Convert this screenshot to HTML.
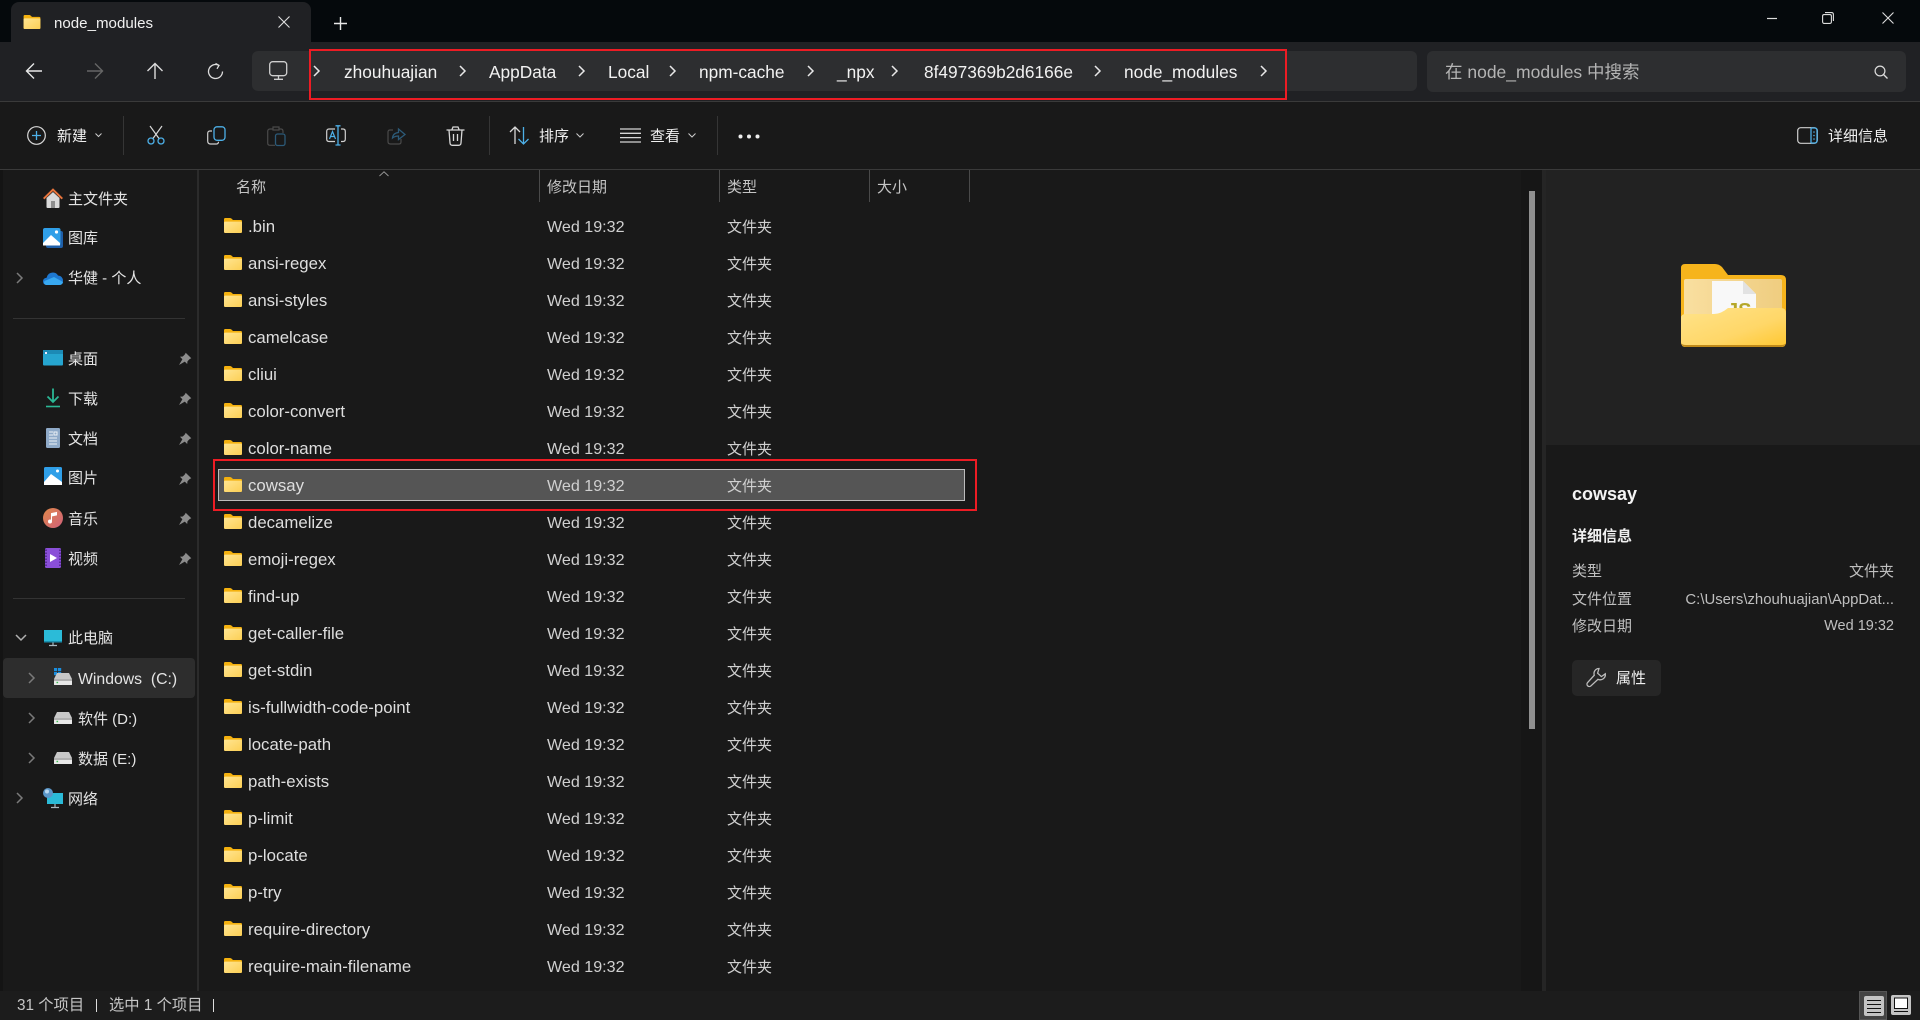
<!DOCTYPE html>
<html lang="zh"><head><meta charset="utf-8"><title>node_modules</title>
<style>
*{box-sizing:border-box}
html,body{margin:0;padding:0;width:1920px;height:1020px;overflow:hidden;background:#191919}
body{font-family:"Liberation Sans","Noto Sans CJK SC",sans-serif;font-size:15px;color:#e8e8e8;position:relative}
.a{position:absolute}
.t{position:absolute;line-height:20px;height:20px;white-space:nowrap}
.b{color:#f2f2f2;font-size:17.3px;top:62px}
.c{position:absolute;top:64px;color:#e8e8e8}
.n{color:#dedede;font-size:16.8px}
.d{color:#d0d0d0;font-size:16.1px;left:547px}
.y{color:#d0d0d0;font-size:15px;margin-top:1px;left:727px}
.h{color:#c4c4c4;font-size:15px;top:178px}
.g{color:#e4e4e4;font-size:15px;margin-top:1px}
.k{color:#f0f0f0;top:127px}
svg{position:absolute;overflow:visible}
.sep{position:absolute;background:#353535;width:1px}
</style></head><body>
<svg width="0" height="0" style="position:absolute"><defs>
<linearGradient id="fg" x1="0" y1="0" x2="1" y2="1"><stop offset="0" stop-color="#ffe592"/><stop offset="1" stop-color="#fccf55"/></linearGradient>
<linearGradient id="fb" x1="0" y1="0" x2="1" y2="1"><stop offset="0" stop-color="#ffe38a"/><stop offset=".6" stop-color="#ffd768"/><stop offset="1" stop-color="#ffc72f"/></linearGradient>
<linearGradient id="fi" x1="0" y1="0" x2="1" y2="0"><stop offset="0" stop-color="#f9dfa0"/><stop offset="1" stop-color="#efcd80"/></linearGradient>
<symbol id="f" viewBox="0 0 18 15"><path d="M0 1.2Q0 0 1.2 0H6Q7 0 7.7 .8L9 2H16.8Q18 2 18 3.2V13.8Q18 15 16.8 15H1.2Q0 15 0 13.8Z" fill="#f4b10f"/><path d="M0 4.6Q0 3.6 1 3.6H17Q18 3.6 18 4.6V13.8Q18 15 16.8 15H1.2Q0 15 0 13.8Z" fill="url(#fg)"/></symbol>
<symbol id="pin" viewBox="0 0 14 14"><path d="M7.7.7 13.3 6.3 11.7 7 9.5 9.2 9.2 12 6.8 9.6 1 13 4.4 7.2 2 4.8 4.8 4.5 7 2.3Z" fill="#8c8c8c"/></symbol>
<symbol id="chev" viewBox="0 0 10 14"><path d="M2 2 7 7 2 12" fill="none" stroke="currentColor" stroke-width="1.5"/></symbol>
<symbol id="drv" viewBox="0 0 18 12"><path d="M3 0H15L18 6V12H0V6Z" fill="#c8c8c8"/><rect y="6" width="18" height="6" rx="1" fill="#e8e8e8"/><path d="M0 7H18" stroke="#555" stroke-width=".7"/><rect x="2.5" y="8.8" width="1.6" height="1.4" fill="#3fbf55"/></symbol>
</defs></svg>

<!-- title bar -->
<div class="a" style="left:0;top:0;width:1920px;height:42px;background:#05090c"></div>
<div class="a" style="left:11px;top:2px;width:300px;height:40px;background:#202124;border-radius:8px 8px 0 0"></div>
<svg style="left:23px;top:15px" width="18" height="14"><use href="#f" width="18" height="14"/></svg>
<div class="t" style="left:54px;top:14px;font-size:15.1px;color:#f0f0f0">node_modules</div>
<svg style="left:278px;top:16px" width="12" height="12"><path d="M.5.5 11.5 11.5M11.5.5.5 11.5" stroke="#e0e0e0" stroke-width="1.1"/></svg>
<svg style="left:334px;top:17px" width="13" height="13"><path d="M6.5 0V13M0 6.5H13" stroke="#e8e8e8" stroke-width="1.4"/></svg>
<svg style="left:1767px;top:13px" width="11" height="10"><path d="M0 5.5H10" stroke="#ddd" stroke-width="1.2"/></svg>
<svg style="left:1822px;top:12px" width="12" height="12"><rect x=".6" y="2.6" width="8.8" height="8.8" rx="1.5" fill="none" stroke="#ddd" stroke-width="1.1"/><path d="M3 .6H9.5Q11.4.6 11.4 2.5V9" fill="none" stroke="#ddd" stroke-width="1.1"/></svg>
<svg style="left:1882px;top:12px" width="12" height="12"><path d="M.5.5 11.5 11.5M11.5.5.5 11.5" stroke="#ddd" stroke-width="1.1"/></svg>

<!-- nav row -->
<div class="a" style="left:0;top:42px;width:1920px;height:59px;background:#202124"></div>
<div class="a" style="left:0;top:101px;width:1920px;height:1px;background:#3a3a3a"></div>
<svg style="left:25px;top:62px" width="18" height="18"><path d="M17 9H1.5M9 1.5 1.5 9 9 16.5" fill="none" stroke="#e8e8e8" stroke-width="1.4"/></svg>
<svg style="left:86px;top:62px" width="18" height="18"><path d="M1 9H16.5M9 1.5 16.5 9 9 16.5" fill="none" stroke="#666" stroke-width="1.4"/></svg>
<svg style="left:146px;top:62px" width="18" height="18"><path d="M9 17V1.5M1.5 9 9 1.5 16.5 9" fill="none" stroke="#dcdcdc" stroke-width="1.4"/></svg>
<svg style="left:207px;top:63px" width="17" height="17"><path d="M11.5 2.2A7 7 0 1 0 15.5 8.5" fill="none" stroke="#dcdcdc" stroke-width="1.3"/><path d="M8.5.5 12 2.4 10 5.8" fill="none" stroke="#dcdcdc" stroke-width="1.3"/></svg>
<div class="a" style="left:252px;top:51px;width:1165px;height:40px;background:#2d2e30;border-radius:6px"></div>
<div class="a" style="left:1427px;top:51px;width:479px;height:41px;background:#2d2e30;border-radius:6px"></div>
<svg style="left:269px;top:61px" width="20" height="19"><rect x=".7" y=".7" width="17" height="14" rx="3" fill="none" stroke="#cfcfcf" stroke-width="1.3"/><path d="M9.5 15V18M5 18.3H14" stroke="#cfcfcf" stroke-width="1.3"/></svg>
<svg class="c" style="left:312px" width="10" height="14"><use href="#chev"/></svg>
<div class="t b" style="left:344px">zhouhuajian</div>
<svg class="c" style="left:458px" width="10" height="14"><use href="#chev"/></svg>
<div class="t b" style="left:489px">AppData</div>
<svg class="c" style="left:577px" width="10" height="14"><use href="#chev"/></svg>
<div class="t b" style="left:608px">Local</div>
<svg class="c" style="left:668px" width="10" height="14"><use href="#chev"/></svg>
<div class="t b" style="left:699px">npm-cache</div>
<svg class="c" style="left:806px" width="10" height="14"><use href="#chev"/></svg>
<div class="t b" style="left:837px">_npx</div>
<svg class="c" style="left:890px" width="10" height="14"><use href="#chev"/></svg>
<div class="t b" style="left:924px">8f497369b2d6166e</div>
<svg class="c" style="left:1093px" width="10" height="14"><use href="#chev"/></svg>
<div class="t b" style="left:1124px">node_modules</div>
<svg class="c" style="left:1259px" width="10" height="14"><use href="#chev"/></svg>
<div class="t" style="left:1445px;top:62px;font-size:17.5px;color:#b4b4b4">在 node_modules 中搜索</div>
<svg style="left:1874px;top:65px" width="14" height="14"><circle cx="6" cy="6" r="4.9" fill="none" stroke="#dcdcdc" stroke-width="1.2"/><path d="M9.5 9.5 13.5 13.5" stroke="#dcdcdc" stroke-width="1.3"/></svg>
<div class="a" style="left:309px;top:49px;width:978px;height:51px;border:2px solid #ed1c24"></div>

<!-- toolbar -->
<div class="a" style="left:0;top:102px;width:1920px;height:67px;background:#191919"></div>
<div class="a" style="left:0;top:169px;width:1920px;height:1px;background:#3a3a3a"></div>
<svg style="left:27px;top:126px" width="19" height="19"><circle cx="9.5" cy="9.5" r="8.8" fill="none" stroke="#d8d8d8" stroke-width="1.2"/><path d="M9.5 5V14M5 9.5H14" stroke="#4db0e8" stroke-width="1.3"/></svg>
<div class="t k" style="left:57px">新建</div>
<svg style="left:95px;top:133px" width="7" height="5"><path d="M.5.5 3.5 3.5 6.5.5" fill="none" stroke="#ccc" stroke-width="1"/></svg>
<div class="sep" style="left:123px;top:116px;height:39px"></div>
<svg style="left:147px;top:125px" width="19" height="20"><path d="M3 1 12 13.5M15 1 6 13.5" stroke="#d8d8d8" stroke-width="1.2" fill="none"/><circle cx="4" cy="16" r="3" fill="none" stroke="#4db0e8" stroke-width="1.3"/><circle cx="14" cy="16" r="3" fill="none" stroke="#4db0e8" stroke-width="1.3"/></svg>
<svg style="left:207px;top:126px" width="19" height="19"><path d="M5 5H3Q.7 5 .7 7.5V15Q.7 18 3.5 18H9Q11.5 18 11.5 15.7" fill="none" stroke="#d0d0d0" stroke-width="1.2"/><rect x="7" y=".8" width="11" height="13.5" rx="3" fill="none" stroke="#4db0e8" stroke-width="1.3"/></svg>
<svg style="left:267px;top:126px" width="19" height="20"><path d="M6 3H3Q.7 3 .7 5.5V17Q.7 19.3 3 19.3H8" fill="none" stroke="#4a4a4a" stroke-width="1.2"/><path d="M6 1H12V4H6ZM12 3H14Q16 3 16 5.5V7" fill="none" stroke="#4a4a4a" stroke-width="1.2"/><rect x="8.5" y="8" width="9.5" height="11.5" rx="2" fill="none" stroke="#2c5a78" stroke-width="1.3"/></svg>
<svg style="left:326px;top:125px" width="20" height="21"><path d="M9 4H3Q.7 4 .7 6.5V14Q.7 16.5 3 16.5H9M15 4H17Q19.3 4 19.3 6.5V14Q19.3 16.5 17 16.5H15" fill="none" stroke="#d0d0d0" stroke-width="1.2"/><path d="M12 1V20M9.5 .8H14.5M9.5 20H14.5" stroke="#4db0e8" stroke-width="1.3" fill="none"/><path d="M3.5 14 6.5 6.5 9.5 14M4.5 11.5H8.5" fill="none" stroke="#4db0e8" stroke-width="1.2"/></svg>
<svg style="left:387px;top:126px" width="19" height="19"><path d="M6 4H3Q1 4 1 6V15.5Q1 18 3.5 18H12Q14 18 14 16V13" fill="none" stroke="#4a4a4a" stroke-width="1.2"/><path d="M5.5 12Q6 7 11.5 6.5V3L18 8.5 11.5 13.5V10Q8 10 5.5 12Z" fill="none" stroke="#2c5a78" stroke-width="1.3"/></svg>
<svg style="left:446px;top:126px" width="19" height="20"><path d="M.5 4H18.5M6 3.5 7 1H12L13 3.5M3 4 4 17Q4.2 19.3 6.5 19.3H12.5Q14.8 19.3 15 17L16 4M7.5 8V15M11.5 8V15" fill="none" stroke="#d8d8d8" stroke-width="1.3"/></svg>
<div class="sep" style="left:489px;top:116px;height:39px"></div>
<svg style="left:509px;top:125px" width="21" height="21"><path d="M6 19V2M1 7 6 2 11 7" fill="none" stroke="#d8d8d8" stroke-width="1.3"/><path d="M14.5 2V19M9.5 14 14.5 19 19.5 14" fill="none" stroke="#4db0e8" stroke-width="1.3"/></svg>
<div class="t k" style="left:539px">排序</div>
<svg style="left:576px;top:133px" width="8" height="5"><path d="M.5.5 4 4 7.5.5" fill="none" stroke="#ccc" stroke-width="1"/></svg>
<svg style="left:620px;top:128px" width="21" height="15"><path d="M0 1H21M0 5.3H21M0 9.6H21M0 14H21" stroke="#d4d4d4" stroke-width="1.3"/></svg>
<div class="t k" style="left:650px">查看</div>
<svg style="left:688px;top:133px" width="8" height="5"><path d="M.5.5 4 4 7.5.5" fill="none" stroke="#ccc" stroke-width="1"/></svg>
<div class="sep" style="left:717px;top:116px;height:39px"></div>
<svg style="left:738px;top:134px" width="22" height="5"><circle cx="2.5" cy="2.5" r="2" fill="#eee"/><circle cx="11" cy="2.5" r="2" fill="#eee"/><circle cx="19.5" cy="2.5" r="2" fill="#eee"/></svg>
<svg style="left:1797px;top:127px" width="21" height="17"><rect x=".7" y=".7" width="19.6" height="15.6" rx="3" fill="none" stroke="#cfcfcf" stroke-width="1.2"/><path d="M14 1V16" stroke="#4db0e8" stroke-width="1.3"/><path d="M14 1H17.5Q20 1 20 3.5V13.5Q20 16 17.5 16H14" fill="none" stroke="#4db0e8" stroke-width="1.3"/><circle cx="17" cy="5" r=".8" fill="#4db0e8"/><circle cx="17" cy="8.5" r=".8" fill="#4db0e8"/><circle cx="17" cy="12" r=".8" fill="#4db0e8"/></svg>
<div class="t k" style="left:1828px">详细信息</div>

<!-- sidebar -->
<div class="a" style="left:0;top:170px;width:3px;height:821px;background:#141414"></div>
<div class="a" style="left:197px;top:170px;width:2px;height:821px;background:#2b2b2b"></div>
<svg style="left:43px;top:188px" width="20" height="21"><path d="M3.5 10V19Q3.5 20 4.5 20H15.5Q16.5 20 16.5 19V10L10 4Z" fill="#d9d9d9"/><path d="M8 20V13H12V20Z" fill="#8e8e8e"/><path d="M.7 10.7 10 1.7 19.3 10.7" fill="none" stroke="#e8743c" stroke-width="2"/></svg>
<div class="t g" style="left:68px;top:189px">主文件夹</div>
<svg style="left:43px;top:228px" width="20" height="20"><rect x="3" y="3" width="17" height="17" rx="2" fill="#1f5fa8"/><rect width="17.5" height="17.5" rx="2" fill="#2f9fe8"/><path d="M0 15 8 7 17 15V17.5H0Z" fill="#fff"/><circle cx="13.5" cy="4" r="1.6" fill="#fff"/></svg>
<div class="t g" style="left:68px;top:228px">图库</div>
<svg style="left:15px;top:271px;color:#7a7a7a" width="10" height="14"><use href="#chev"/></svg>
<svg style="left:43px;top:271px" width="20" height="14"><path d="M4 14Q0 14 0 10.3 0 7.2 3.6 6.7 5 1.5 10 1.5 13.4 1.5 15 4.5 20 5 20 10 20 14 16 14Z" fill="#1e78d0"/><path d="M3 14Q0 13 1.5 10L11 6 20 11Q19.5 14 16 14Z" fill="#38a8f0"/></svg>
<div class="t g" style="left:68px;top:268px">华健 - 个人</div>
<div class="a" style="left:13px;top:318px;width:172px;height:1px;background:#333"></div>

<svg style="left:43px;top:350px" width="20" height="16"><rect width="20" height="15.5" rx="1" fill="#26a5cf"/><rect y="0" width="20" height="4" fill="#1c8ab5"/><rect x="2" y="2" width="2" height="2" fill="#eef"/></svg>
<div class="t g" style="left:68px;top:349px">桌面</div>
<svg style="left:178px;top:352px" width="14" height="14"><use href="#pin"/></svg>
<svg style="left:46px;top:388px" width="14" height="20"><path d="M7 .5V14M1.5 8.5 7 14 12.5 8.5" fill="none" stroke="#2bb795" stroke-width="1.8"/><path d="M0 18.5H14" stroke="#2bb795" stroke-width="1.6"/></svg>
<div class="t g" style="left:68px;top:389px">下载</div>
<svg style="left:178px;top:392px" width="14" height="14"><use href="#pin"/></svg>
<svg style="left:46px;top:428px" width="14" height="20"><rect width="14" height="20" rx="1.2" fill="#8faac8"/><path d="M3 4H7M8 4H11V7H8ZM3 7H7M3 10H11M3 13H11M3 16H11" stroke="#eef2f6" stroke-width="1" fill="none"/></svg>
<div class="t g" style="left:68px;top:429px">文档</div>
<svg style="left:178px;top:432px" width="14" height="14"><use href="#pin"/></svg>
<svg style="left:44px;top:467px" width="18" height="18"><rect width="18" height="18" rx="1.5" fill="#2f9fe8"/><path d="M0 15 7 7 18 15V18H0Z" fill="#fff"/><circle cx="13.5" cy="4" r="1.5" fill="#fff"/></svg>
<div class="t g" style="left:68px;top:468px">图片</div>
<svg style="left:178px;top:472px" width="14" height="14"><use href="#pin"/></svg>
<svg style="left:43px;top:508px" width="20" height="20"><defs><linearGradient id="mu" x1="0" y1="0" x2="1" y2="1"><stop offset="0" stop-color="#e0884a"/><stop offset="1" stop-color="#d0607a"/></linearGradient></defs><circle cx="10" cy="10" r="10" fill="url(#mu)"/><path d="M8.5 13.5V5.5L13.5 4.5V7L8.5 8" fill="#fff" stroke="#fff"/><circle cx="7" cy="13.5" r="2" fill="#fff"/></svg>
<div class="t g" style="left:68px;top:509px">音乐</div>
<svg style="left:178px;top:512px" width="14" height="14"><use href="#pin"/></svg>
<svg style="left:45px;top:548px" width="16" height="20"><rect width="16" height="20" rx="1.5" fill="#8a4fd8"/><path d="M5 6 12 10 5 14Z" fill="#fff"/><path d="M1 1.5V18.5M15 1.5V18.5" stroke="#3a1a70" stroke-width="1.2" stroke-dasharray="1.5 1.5"/></svg>
<div class="t g" style="left:68px;top:549px">视频</div>
<svg style="left:178px;top:552px" width="14" height="14"><use href="#pin"/></svg>
<div class="a" style="left:13px;top:598px;width:172px;height:1px;background:#333"></div>

<svg style="left:15px;top:634px" width="12" height="8"><path d="M1 1 6 6 11 1" fill="none" stroke="#b0b0b0" stroke-width="1.5"/></svg>
<svg style="left:44px;top:630px" width="18" height="16"><rect width="18" height="12.5" fill="#2bbbd8"/><rect y="11" width="18" height="1.5" fill="#1a8fae"/><path d="M9 12.5V15M5 15.5H13" stroke="#a8b8c0" stroke-width="1.2"/></svg>
<div class="t g" style="left:68px;top:628px">此电脑</div>
<div class="a" style="left:3px;top:658px;width:192px;height:40px;background:#2d2d2d;border-radius:4px"></div>
<svg style="left:27px;top:671px;color:#7a7a7a" width="10" height="14"><use href="#chev"/></svg>
<svg style="left:54px;top:668px" width="18" height="18"><rect width="3.2" height="3.2" fill="#1a8fe0"/><rect x="4" width="3.2" height="3.2" fill="#1a8fe0"/><rect y="4" width="3.2" height="3.2" fill="#1a8fe0"/><rect x="4" y="4" width="3.2" height="3.2" fill="#1a8fe0"/><use href="#drv" y="5" width="18" height="12"/></svg>
<div class="t g" style="left:78px;top:669px;font-size:15.8px">Windows&nbsp; (C:)</div>
<svg style="left:27px;top:711px;color:#7a7a7a" width="10" height="14"><use href="#chev"/></svg>
<svg style="left:54px;top:712px" width="18" height="12"><use href="#drv"/></svg>
<div class="t g" style="left:78px;top:709px">软件 (D:)</div>
<svg style="left:27px;top:751px;color:#7a7a7a" width="10" height="14"><use href="#chev"/></svg>
<svg style="left:54px;top:752px" width="18" height="12"><use href="#drv"/></svg>
<div class="t g" style="left:78px;top:749px">数据 (E:)</div>
<svg style="left:15px;top:791px;color:#7a7a7a" width="10" height="14"><use href="#chev"/></svg>
<svg style="left:43px;top:788px" width="20" height="20"><rect x="4" y="5" width="16" height="11" fill="#2bbbd8"/><path d="M12 16V19M8 19.5H16" stroke="#a8b8c0" stroke-width="1.2"/><circle cx="5" cy="5" r="5" fill="#5a96c8"/><circle cx="4" cy="3.5" r="2" fill="#b8d8f0"/></svg>
<div class="t g" style="left:68px;top:789px">网络</div>

<!-- header -->
<div class="t h" style="left:236px">名称</div>
<svg style="left:379px;top:171px" width="10" height="6"><path d="M.5 5 5 .8 9.5 5" fill="none" stroke="#9a9a9a" stroke-width=".9"/></svg>
<div class="sep" style="left:539px;top:170px;height:32px;background:#4a4a4a"></div>
<div class="t h" style="left:547px">修改日期</div>
<div class="sep" style="left:719px;top:170px;height:32px;background:#4a4a4a"></div>
<div class="t h" style="left:727px">类型</div>
<div class="sep" style="left:869px;top:170px;height:32px;background:#4a4a4a"></div>
<div class="t h" style="left:877px">大小</div>
<div class="sep" style="left:969px;top:170px;height:32px;background:#4a4a4a"></div>

<!-- selected row -->
<div class="a" style="left:218px;top:469px;width:747px;height:32px;background:#555;border:1px solid #bcbcbc"></div>
<div class="a" style="left:213px;top:459px;width:764px;height:52px;border:2px solid #ed1c24"></div>

<!-- rows -->
<svg style="left:224px;top:218px" width="18" height="15"><use href="#f"/></svg><div class="t n" style="left:248px;top:217px">.bin</div><div class="t d" style="top:217px">Wed 19:32</div><div class="t y" style="top:217px">文件夹</div>
<svg style="left:224px;top:255px" width="18" height="15"><use href="#f"/></svg><div class="t n" style="left:248px;top:254px">ansi-regex</div><div class="t d" style="top:254px">Wed 19:32</div><div class="t y" style="top:254px">文件夹</div>
<svg style="left:224px;top:292px" width="18" height="15"><use href="#f"/></svg><div class="t n" style="left:248px;top:291px">ansi-styles</div><div class="t d" style="top:291px">Wed 19:32</div><div class="t y" style="top:291px">文件夹</div>
<svg style="left:224px;top:329px" width="18" height="15"><use href="#f"/></svg><div class="t n" style="left:248px;top:328px">camelcase</div><div class="t d" style="top:328px">Wed 19:32</div><div class="t y" style="top:328px">文件夹</div>
<svg style="left:224px;top:366px" width="18" height="15"><use href="#f"/></svg><div class="t n" style="left:248px;top:365px">cliui</div><div class="t d" style="top:365px">Wed 19:32</div><div class="t y" style="top:365px">文件夹</div>
<svg style="left:224px;top:403px" width="18" height="15"><use href="#f"/></svg><div class="t n" style="left:248px;top:402px">color-convert</div><div class="t d" style="top:402px">Wed 19:32</div><div class="t y" style="top:402px">文件夹</div>
<svg style="left:224px;top:440px" width="18" height="15"><use href="#f"/></svg><div class="t n" style="left:248px;top:439px">color-name</div><div class="t d" style="top:439px">Wed 19:32</div><div class="t y" style="top:439px">文件夹</div>
<svg style="left:224px;top:477px" width="18" height="15"><use href="#f"/></svg><div class="t n" style="left:248px;top:476px">cowsay</div><div class="t d" style="top:476px">Wed 19:32</div><div class="t y" style="top:476px">文件夹</div>
<svg style="left:224px;top:514px" width="18" height="15"><use href="#f"/></svg><div class="t n" style="left:248px;top:513px">decamelize</div><div class="t d" style="top:513px">Wed 19:32</div><div class="t y" style="top:513px">文件夹</div>
<svg style="left:224px;top:551px" width="18" height="15"><use href="#f"/></svg><div class="t n" style="left:248px;top:550px">emoji-regex</div><div class="t d" style="top:550px">Wed 19:32</div><div class="t y" style="top:550px">文件夹</div>
<svg style="left:224px;top:588px" width="18" height="15"><use href="#f"/></svg><div class="t n" style="left:248px;top:587px">find-up</div><div class="t d" style="top:587px">Wed 19:32</div><div class="t y" style="top:587px">文件夹</div>
<svg style="left:224px;top:625px" width="18" height="15"><use href="#f"/></svg><div class="t n" style="left:248px;top:624px">get-caller-file</div><div class="t d" style="top:624px">Wed 19:32</div><div class="t y" style="top:624px">文件夹</div>
<svg style="left:224px;top:662px" width="18" height="15"><use href="#f"/></svg><div class="t n" style="left:248px;top:661px">get-stdin</div><div class="t d" style="top:661px">Wed 19:32</div><div class="t y" style="top:661px">文件夹</div>
<svg style="left:224px;top:699px" width="18" height="15"><use href="#f"/></svg><div class="t n" style="left:248px;top:698px">is-fullwidth-code-point</div><div class="t d" style="top:698px">Wed 19:32</div><div class="t y" style="top:698px">文件夹</div>
<svg style="left:224px;top:736px" width="18" height="15"><use href="#f"/></svg><div class="t n" style="left:248px;top:735px">locate-path</div><div class="t d" style="top:735px">Wed 19:32</div><div class="t y" style="top:735px">文件夹</div>
<svg style="left:224px;top:773px" width="18" height="15"><use href="#f"/></svg><div class="t n" style="left:248px;top:772px">path-exists</div><div class="t d" style="top:772px">Wed 19:32</div><div class="t y" style="top:772px">文件夹</div>
<svg style="left:224px;top:810px" width="18" height="15"><use href="#f"/></svg><div class="t n" style="left:248px;top:809px">p-limit</div><div class="t d" style="top:809px">Wed 19:32</div><div class="t y" style="top:809px">文件夹</div>
<svg style="left:224px;top:847px" width="18" height="15"><use href="#f"/></svg><div class="t n" style="left:248px;top:846px">p-locate</div><div class="t d" style="top:846px">Wed 19:32</div><div class="t y" style="top:846px">文件夹</div>
<svg style="left:224px;top:884px" width="18" height="15"><use href="#f"/></svg><div class="t n" style="left:248px;top:883px">p-try</div><div class="t d" style="top:883px">Wed 19:32</div><div class="t y" style="top:883px">文件夹</div>
<svg style="left:224px;top:921px" width="18" height="15"><use href="#f"/></svg><div class="t n" style="left:248px;top:920px">require-directory</div><div class="t d" style="top:920px">Wed 19:32</div><div class="t y" style="top:920px">文件夹</div>
<svg style="left:224px;top:958px" width="18" height="15"><use href="#f"/></svg><div class="t n" style="left:248px;top:957px">require-main-filename</div><div class="t d" style="top:957px">Wed 19:32</div><div class="t y" style="top:957px">文件夹</div>

<!-- scrollbar + divider -->
<div class="a" style="left:1521px;top:170px;width:21px;height:821px;background:#161616"></div>
<div class="a" style="left:1529px;top:191px;width:6px;height:538px;background:#8f8f8f"></div>
<div class="a" style="left:1542px;top:170px;width:4px;height:821px;background:#252525"></div>

<!-- details -->
<div class="a" style="left:1546px;top:170px;width:374px;height:275px;background:#222"></div>
<svg style="left:1681px;top:264px" width="105" height="83" viewBox="0 0 105 83">
<path d="M0 4Q0 0 4 0H34Q38 0 41 3L47 11H100Q105 11 105 16V78Q105 83 100 83H5Q0 83 0 78Z" fill="#f6b41c"/>
<rect x="3" y="15" width="98" height="50" rx="2" fill="url(#fi)"/>
<path d="M31 17H62L75 30V60H31Z" fill="#f8f8f8"/><path d="M62 17 75 30H62Z" fill="#e2e2e2"/>
<text x="46" y="53" font-size="20" font-weight="700" fill="#b5a72a" font-family="Liberation Sans">JS</text>
<path d="M0 54Q0 50 5 50H33Q40 50 47 44H100Q105 44 105 49V78Q105 83 100 83H5Q0 83 0 78Z" fill="url(#fb)"/>
<path d="M0 79Q1 83 5 83H100Q104 83 105 79Q104 81 100 81H5Q1 81 0 79Z" fill="#c08a1a"/>
</svg>
<div class="t" style="left:1572px;top:484px;font-size:18px;font-weight:700;color:#f4f4f4">cowsay</div>
<div class="t" style="left:1572px;top:527px;font-size:15px;font-weight:700;color:#efefef">详细信息</div>
<div class="t" style="left:1572px;top:562px;font-size:15px;color:#bfbfbf">类型</div>
<div class="t" style="right:26px;top:562px;font-size:15px;color:#bfbfbf">文件夹</div>
<div class="t" style="left:1572px;top:590px;font-size:15px;color:#bfbfbf">文件位置</div>
<div class="t" style="right:26px;top:590px;font-size:14.9px;color:#bfbfbf">C:\Users\zhouhuajian\AppDat...</div>
<div class="t" style="left:1572px;top:617px;font-size:15px;color:#bfbfbf">修改日期</div>
<div class="t" style="right:26px;top:616px;font-size:14.5px;color:#bfbfbf">Wed 19:32</div>
<div class="a" style="left:1572px;top:660px;width:89px;height:36px;background:#262626;border-radius:5px"></div>
<svg style="left:1586px;top:667px" width="21" height="21"><path d="M13 1.5A5 5 0 0 0 8.3 8.2L1.6 15.6A2.2 2.2 0 0 0 5 18.8L12 12.3A5.2 5.2 0 0 0 19.3 6.8L15.4 9.6 11.6 6.2Z" fill="none" stroke="#bdbdbd" stroke-width="1.3"/></svg>
<div class="t" style="left:1616px;top:669px;font-size:15px;color:#f0f0f0">属性</div>

<!-- status bar -->
<div class="a" style="left:0;top:991px;width:1920px;height:29px;background:#1c1c1c"></div>
<div class="t" style="left:17px;top:996px;font-size:15.3px;color:#c6c6c6">31 个项目</div>
<div class="a" style="left:96px;top:999px;width:1px;height:13px;background:#ddd"></div>
<div class="t" style="left:109px;top:996px;font-size:15.3px;color:#c6c6c6">选中 1 个项目</div>
<div class="a" style="left:213px;top:999px;width:1px;height:13px;background:#ddd"></div>
<div class="a" style="left:1859px;top:991px;width:28px;height:29px;background:#444;border:1px solid #555"></div>
<svg style="left:1864px;top:996px" width="20" height="20"><rect width="20" height="20" rx="2" fill="#c4c4c4"/><path d="M3 4.5H17M3 8.5H17M3 12.5H17M3 16.5H17" stroke="#111" stroke-width="1"/></svg>
<svg style="left:1891px;top:995px" width="20" height="20"><rect width="20" height="20" rx="2" fill="#c4c4c4"/><rect x="3.5" y="3" width="13" height="10.5" fill="#fff" stroke="#111"/><path d="M3 16.5H17" stroke="#111" stroke-width="1"/></svg>
</body></html>
